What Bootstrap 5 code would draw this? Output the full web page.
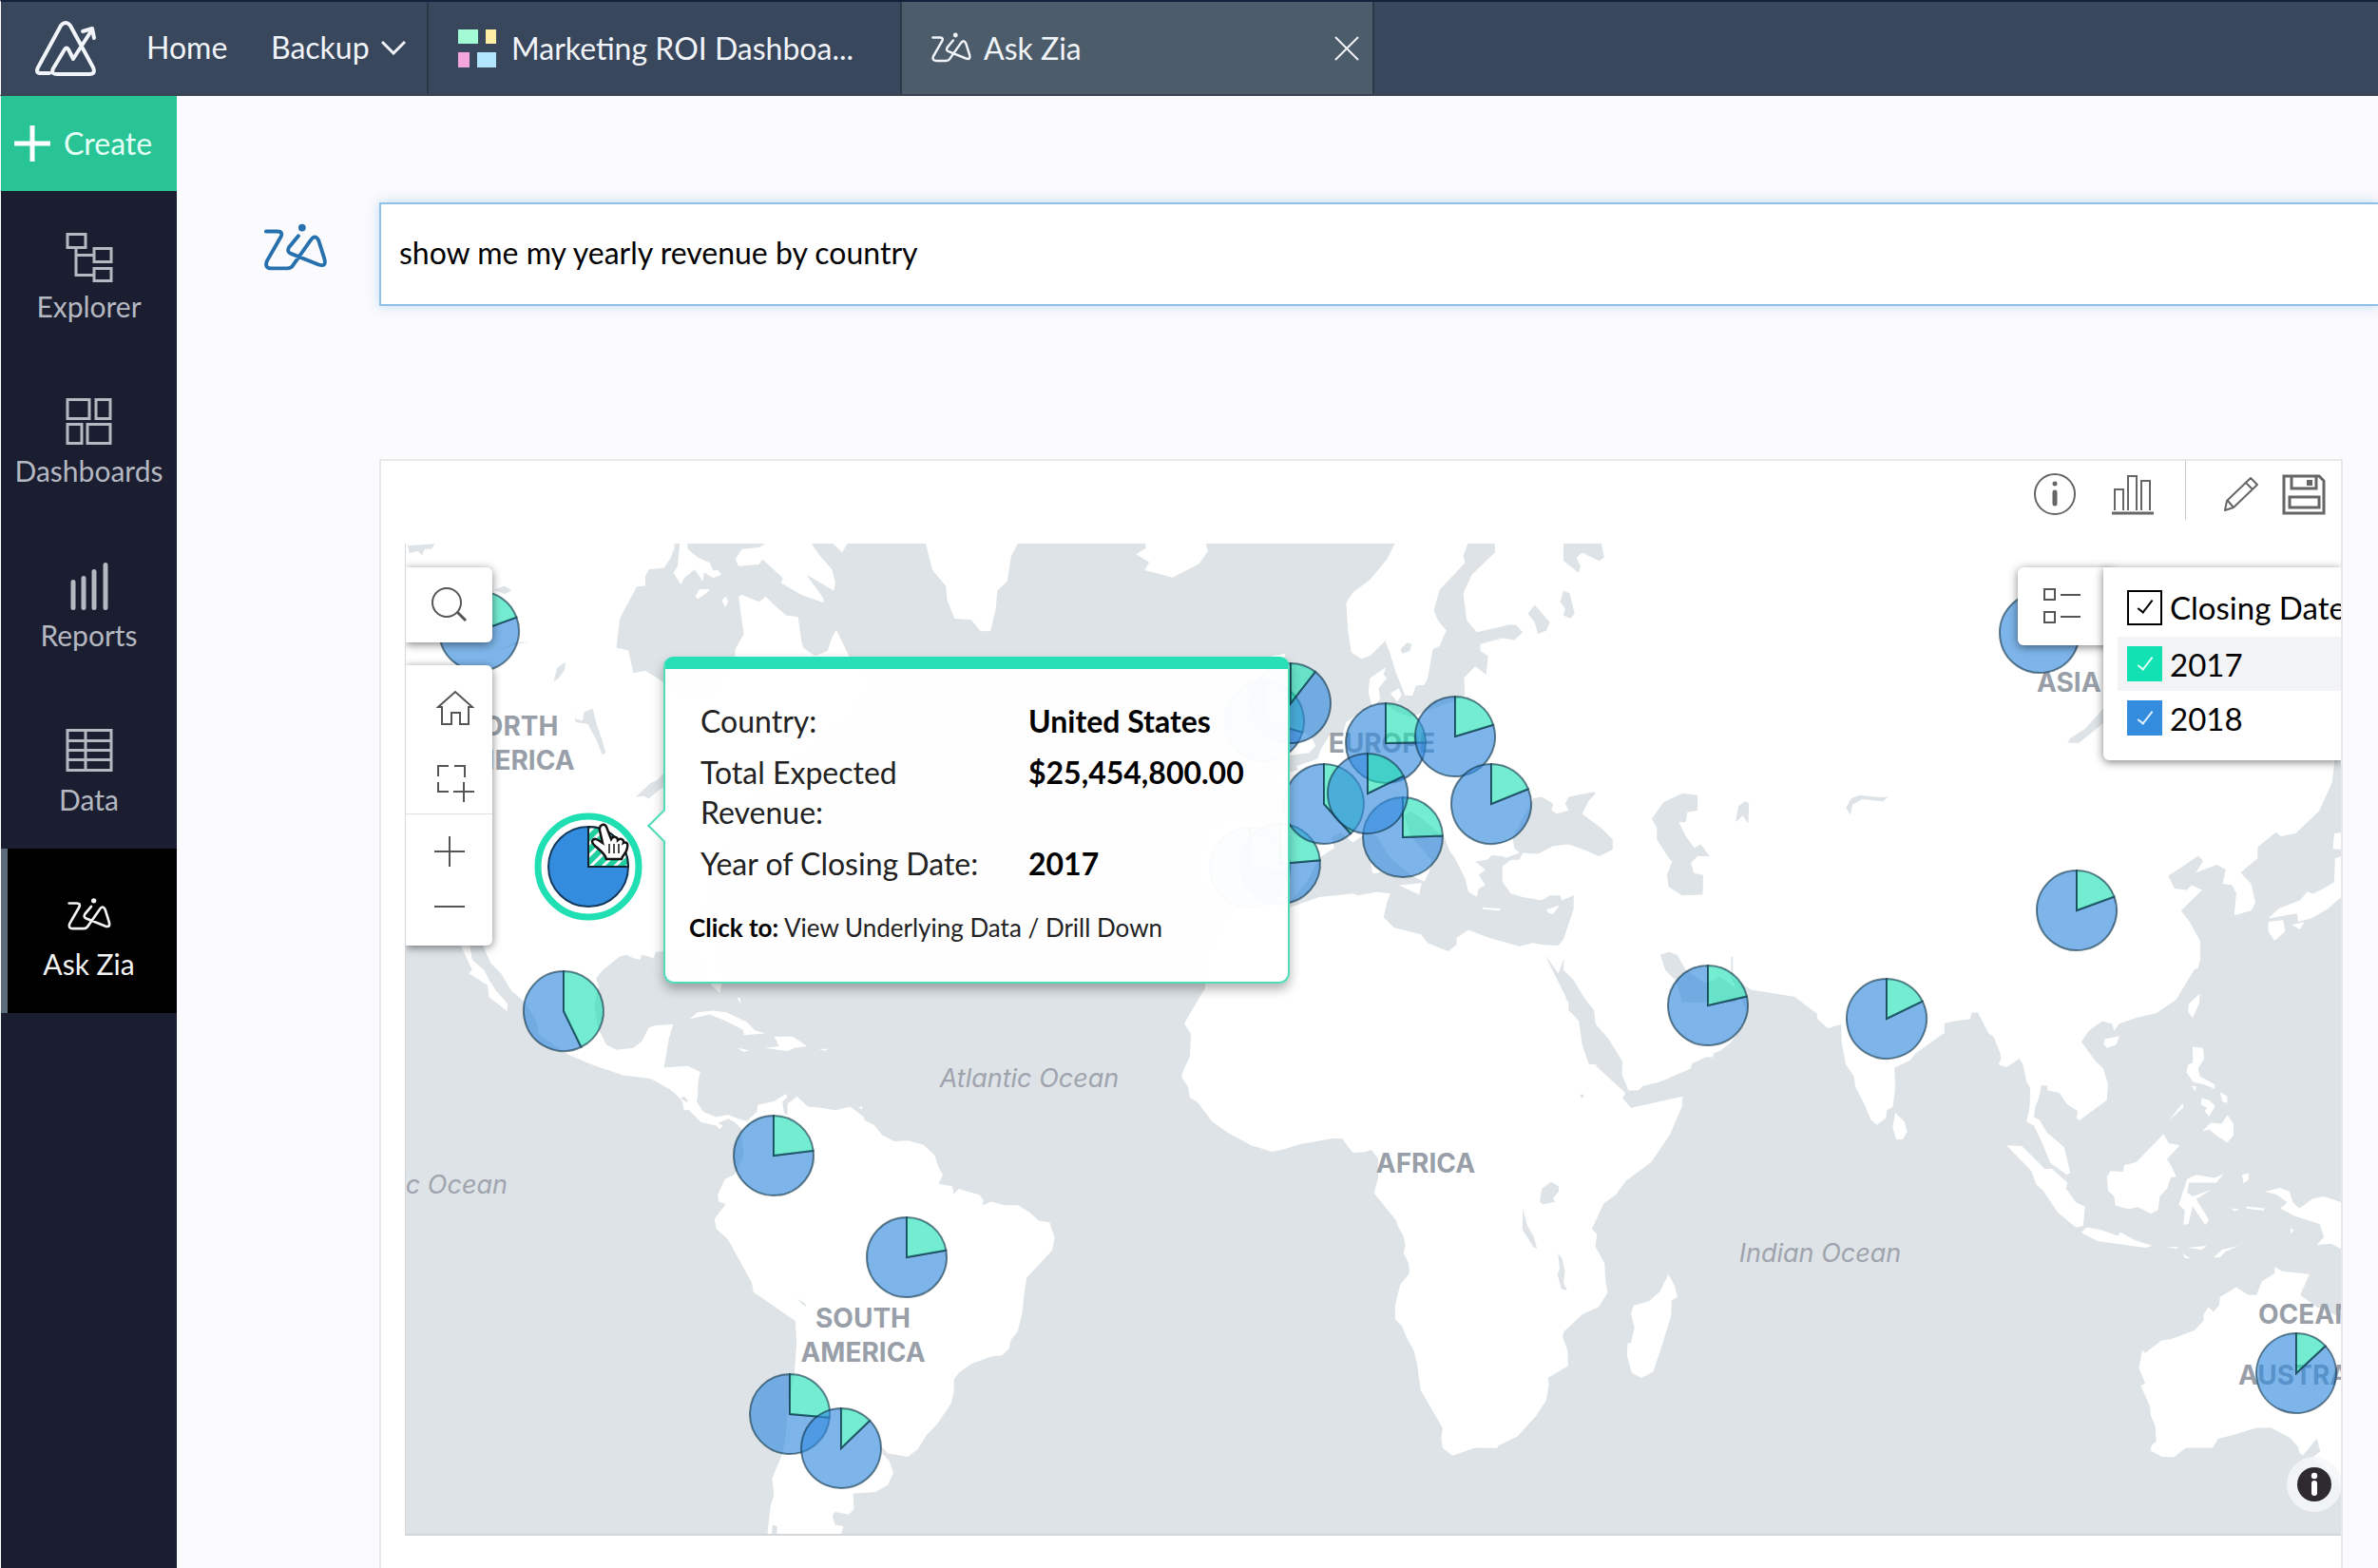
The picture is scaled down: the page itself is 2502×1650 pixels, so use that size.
<!DOCTYPE html>
<html lang="en">
<head>
<meta charset="utf-8">
<meta name="viewport" content="width=device-width, initial-scale=1">
<title>Ask Zia</title>
<link href="https://cdn.jsdelivr.net/npm/bootstrap@5.3.0/dist/css/bootstrap.min.css" rel="stylesheet">
<style>
:root{--navy:#38475c;--side:#1a1e30;--mint:#28e0b7;--text:32px}
body{font-family:Lato,"Liberation Sans",sans-serif;font-size:var(--text);line-height:42px;background:#fbfafd;color:#111;min-height:100vh;overflow-x:hidden}
a,button{color:inherit;text-decoration:none}
.plain-btn{background:none;border:0;padding:0;line-height:0}
.line-icon{fill:none;stroke:currentColor;stroke-width:2;flex:none}
.top-bar{height:101px;background:var(--navy);color:#f1f4f8;border-top:2px solid #16203a;border-bottom:2px solid #3a4653;border-left:1px solid #fff}
.brand-mark{margin:0 52px 0 35px}
.open-tab{border-right:2px solid #2b3947}
.tab-report{width:498px;padding-left:31px;gap:16px}
.tab-zia{width:497px;padding:0 14px 0 30px;gap:12px;background:#4d5c6a}
.space-menu{width:166px;border-right:2px solid #2b3947;gap:12px}
.home-link{width:131px}
.home-link,.space-menu{padding-bottom:2px}
.side-bar{width:186px;background:var(--side);color:#b5b8c0;border-left:1px solid #fff;flex:none}
.create-btn{height:100px;background:#28c495;color:#e4fff5;border:0;gap:14px;padding:0 14px}
.side-item{height:173px;padding-top:42px;gap:6px;font-size:30px;line-height:36px}
.side-item svg{height:55px}
.side-item.current{background:#000;color:#f4f4f4;box-shadow:inset 7px 0 #5b6b7c}
.ask-row{padding:112px 0 0 90px;gap:53px}
.ask-logo{padding-bottom:14px;line-height:0}
.ask-input{height:109px;border:2px solid #8fc1e6;border-right:0;border-radius:0;padding:0 20px 4px 19px;font-size:var(--text);color:#000;background:#fff;box-shadow:0 0 12px rgba(120,185,235,.45)}
.ask-input:focus{border-color:#8fc1e6;box-shadow:0 0 12px rgba(120,185,235,.45)}
.result-card{margin:161px 37px 0 213px;background:#fff;border:2px solid #e9e7ea;border-bottom:0;padding-left:25px}
.tool-row{height:87px;padding:12px 16px 0 0;color:#666}
.tool-row svg{display:block}
.tool-split{width:1px;height:62px;background:#ccc;margin:-12px 39px 0 32px}
.map-area{background:#dde3e6;border-left:1px solid #d5d8da;border-bottom:2px solid #d3d6d8}
.map-area>svg{display:block;width:100%;height:auto}
.region-name{font:700 28px Inter,sans-serif;fill:#999fa8}
.ocean-name{font:italic 400 27px Inter,sans-serif;fill:#a0a4ae}
.float-box{position:absolute;background:#fff;color:#555;box-shadow:0 2px 10px rgba(0,0,0,.5)}
.find-box{left:0;top:25px;width:91px;height:79px;border-radius:0 6px 6px 0}
.zoom-box{left:0;top:128px;width:91px;height:295px;border-radius:0 6px 6px 0;padding-top:26px}
.zoom-box hr{margin:12px 0 22px;width:100%;border-color:#888}
.home-btn{margin:0 0 40px 12px}
.area-btn{margin-left:12px}
.list-box{right:240px;top:25px;width:100px;height:82px;border-radius:6px;padding-left:27px}
.legend-box{right:0;top:25px;width:250px;height:203px;border-radius:0 0 0 6px;padding:11px 0 0 15px;overflow:hidden}
.legend-line{height:57px;padding-left:10px;gap:8px;font-size:33px;line-height:40px;white-space:nowrap;color:#000}
.legend-line.hot{background:#f2f3f5}
.legend-line:first-child{height:62px}
.tick{appearance:none;width:37px;height:37px;margin:0;flex:none;display:grid;place-items:center;background:#fff;border:2px solid #000;color:#000}
.tick::after{content:"";width:8px;height:17px;border:solid currentColor;border-width:0 2px 2px 0;transform:rotate(38deg);margin-top:-5px}
.tick-a{background:#12e2b3;border-color:#12e2b3;color:#d8fff5}
.tick-b{background:#348cde;border-color:#348cde;color:#dcefff}
.tip-box{position:absolute;left:271px;top:119px;width:659px;height:344px;background:rgba(255,255,255,.97);border:2px solid #4fdcb9;border-top:13px solid var(--mint);border-radius:11px;box-shadow:0 6px 12px rgba(0,0,0,.3);padding:34px 20px 0 24px;color:#222}
.tip-box::before{content:"";position:absolute;left:-14px;top:153px;width:24px;height:24px;background:#fff;border:solid #4fdcb9;border-width:0 0 2px 2px;transform:rotate(45deg)}
.tip-data th,.tip-data td{padding:0 0 12px 13px;vertical-align:top}
.tip-data th{font-weight:400;width:344px;padding-right:20px}
.tip-data td{font-weight:700;color:#000;padding-left:14px}
.tip-foot{font-size:26px;line-height:36px;margin-top:16px;padding-left:1px}
.tip-foot b{color:#000}
.credit-btn{position:absolute;right:-1px;bottom:23px;width:58px;height:58px;border-radius:50%;background:rgba(245,247,248,.85)}
</style>
<script src="https://cdn.jsdelivr.net/npm/bootstrap@5.3.0/dist/js/bootstrap.bundle.min.js"></script>
</head>
<body class="d-flex flex-column">
<svg width="0" height="0" class="position-absolute" aria-hidden="true">
<symbol id="zia" viewBox="0 0 72 54"><path d="M4 9H16Q23 9 20 15L5 41Q2 49 10 49H27Q31 49 33 46L52 19Q57 11 61 19L67 38Q70 48 61 45L31 33Q26 31 29 26L39 14" fill="none" stroke="currentColor" stroke-width="4" stroke-linecap="round" stroke-linejoin="round"/><circle cx="43" cy="5" r="4" fill="currentColor"/></symbol>
</svg>
<header class="top-bar d-flex align-items-stretch">
<nav class="d-flex align-items-stretch" aria-label="Workspace">
<a href="#" class="brand-mark d-flex align-items-center" aria-label="Analytics"><svg width="66" height="60" viewBox="0 0 66 60" class="line-icon" stroke-linecap="round" stroke-linejoin="round"><path stroke-width="4" d="M16 56H7Q1 56 4 50L28 6Q33 0 38 6L62 50Q65 57 58 57H24Q17 57 20 51L32 31Q34 28 36 31L41 41 61 10M51 12L61 9 63 19"/></svg></a>
<a href="#" class="home-link d-flex align-items-center">Home</a>
<button class="space-menu plain-btn d-flex align-items-center">Backup <svg width="26" height="16" viewBox="0 0 26 16" class="line-icon"><path stroke-width="3" d="M1 2L13 14 25 2"/></svg></button>
</nav>
<a href="#" class="open-tab tab-report d-flex align-items-center"><svg width="40" height="40" viewBox="0 0 40 40"><path fill="#a3fbd5" d="M0 0h21v15H0z"/><path fill="#fdeea6" d="M29 0h11v15H29z"/><path fill="#f3a5dc" d="M0 24h12v16H0z"/><path fill="#b2e6ff" d="M20 24h20v16H20z"/></svg>Marketing ROI Dashboa...</a>
<div class="open-tab tab-zia d-flex align-items-center"><svg width="44" height="33" class="flex-shrink-0"><use href="#zia"/></svg><a href="#" class="flex-grow-1">Ask Zia</a><button class="plain-btn" aria-label="Close tab"><svg width="26" height="26" viewBox="0 0 26 26" class="line-icon"><path d="M1 1L25 25M25 1L1 25"/></svg></button></div>
</header>
<div class="d-flex flex-grow-1">
<aside class="side-bar d-flex flex-column">
<button class="create-btn d-flex align-items-center"><svg width="38" height="38" viewBox="0 0 38 38" class="line-icon"><path stroke="#fff" stroke-width="5" d="M19 0V38M0 19H38"/></svg>Create</button>
<nav class="d-flex flex-column" aria-label="Sections">
<a href="#" class="side-item d-flex flex-column align-items-center"><svg width="50" viewBox="0 0 50 54" class="line-icon"><path stroke-width="3" d="M2 3H21V17H2zM30 18H48V32H30zM30 39H48V52H30zM11 17V46H30M11 25H30"/></svg>Explorer</a>
<a href="#" class="side-item d-flex flex-column align-items-center"><svg width="50" viewBox="0 0 50 54" class="line-icon"><path stroke-width="3" d="M2 4H25V24H2zM32 4H47V24H32zM2 30H17V50H2zM23 30H47V50H23z"/></svg>Dashboards</a>
<a href="#" class="side-item d-flex flex-column align-items-center"><svg width="50" viewBox="0 0 50 54" class="line-icon" stroke-linecap="round"><path stroke-width="5" d="M8 23V50M19 19V50M30 12V50M42 5V50"/></svg>Reports</a>
<a href="#" class="side-item d-flex flex-column align-items-center"><svg width="50" viewBox="0 0 50 54" class="line-icon"><path stroke-width="3" d="M2 6H48V48H2zM2 17H48M2 27H48M2 37H48M21 6V48"/></svg>Data</a>
<a href="#" class="side-item current d-flex flex-column align-items-center" aria-current="page"><svg width="48"><use href="#zia"/></svg>Ask Zia</a>
</nav>
</aside>
<main class="flex-grow-1 d-flex flex-column">
<div class="ask-row d-flex align-items-center">
<div class="ask-logo"><svg width="70" height="54" color="#2670ad"><use href="#zia"/></svg></div>
<input class="ask-input form-control" type="text" aria-label="Ask Zia a question" value="show me my yearly revenue by country">
</div>
<section class="result-card flex-grow-1">
<div class="tool-row d-flex align-items-start justify-content-end">
<button class="plain-btn" aria-label="Info"><svg width="46" height="46" viewBox="0 0 46 46" class="line-icon"><circle cx="23" cy="23" r="21"/><path stroke-width="5" stroke-linecap="round" d="M23 21V33"/><circle cx="23" cy="12" r="2.5" fill="currentColor" stroke="none"/></svg></button>
<button class="plain-btn ms-4 ps-2" aria-label="Change chart type"><svg width="50" height="46" viewBox="-4 0 50 46" class="line-icon"><path d="M4 40V18H13V40M18 40V4H27V40M32 40V9H41V40"/><path stroke-width="3" d="M1 43H45"/></svg></button>
<div class="tool-split"></div>
<button class="plain-btn me-4" aria-label="Edit"><svg width="38" height="46" viewBox="0 0 38 46" class="line-icon" stroke-linejoin="round"><path d="M2 40L4 30 29 6 36 13 11 37zM24 11L31 18M5 30L11 37"/></svg></button>
<button class="plain-btn" aria-label="Save"><svg width="46" height="46" viewBox="0 0 46 46" class="line-icon"><path stroke-width="3" d="M2 4H39L44 9V43H2zM10 4V17H36V4M8 26H39V37H8z"/><path fill="currentColor" stroke="none" d="M26 8h6v6h-6z"/></svg></button>
</div>
<div class="map-area position-relative overflow-hidden">
<svg viewBox="427 572 2036 1042" role="img" aria-label="Revenue by country">
<defs><pattern id="hatch" width="9" height="9" patternUnits="userSpaceOnUse" patternTransform="rotate(45)"><rect width="9" height="9" fill="#1fcf9f"/><rect width="3" height="9" fill="#fff"/></pattern></defs>
<g fill="#fff">
<!-- North and Central America -->
<g transform="translate(420 560) scale(.357143)">
<path d="M15 20H812L810 50 800 75 780 105 735 110 725 130V158L700 160 690 180 665 225 650 255 640 340 675 348 690 415 725 408 760 430 850 490 930 480 990 365 990 345 1015 300 1008 250 1000 190 1010 185 1060 205 1080 190 1105 215 1140 245 1175 250 1185 320 1190 340 1225 365 1262 350 1275 310 1288 288 1325 365 1400 450 1300 560 1150 680 1000 820 940 1000 900 1100 940 1250 950 1330 945 1358 920 1335 890 1250 780 1235 755 1237 750 1255 715 1245 710 1260 690 1255 670 1245 650 1250 600 1290 580 1315 588 1340 575 1390 585 1460 610 1510 640 1525 690 1520 715 1500 735 1460 755 1453 808 1450 795 1490 790 1520 780 1578 850 1573 885 1590 880 1620 878 1670 860 1690 795 1640 740 1610 660 1600 565 1568 500 1540 410 1480 405 1440 370 1385 330 1350 300 1300 270 1270 245 1215H208L215 1260 250 1290 265 1320 285 1350 320 1390 318 1412 265 1370 260 1335 205 1300 215 1290 180 1215 100 1150 15 1050z"/>
<path d="M828 20H848L850 50 880 75 915 90 925 112 940 112 950 125 925 135 898 118 895 145 870 110 840 135 830 155 808 120 820 100zM1085 30L1060 45 1010 50 990 80 1000 100 1060 95 1070 80 1130 135 1125 150 1185 185 1250 208V195L1200 125 1280 172 1285 150 1275 110 1240 70 1205 20 1085 20zM1275 30L1305 60 1322 30zM872 190L885 168 915 168 905 180 880 197zM950 200L962 190 970 205 960 222z"/>
</g>
<!-- Greenland and Iceland -->
<path transform="translate(420 560) scale(.7015 .3333)" d="M788 20L795 80 800 120 820 170 822 215 833 273 858 277 872 313 887 312 895 240 897 185 912 155 918 75 932 20zM1118 20L1120 50 1105 70 1125 95 1118 120 1160 143 1200 100 1213 60 1208 20z"/>
<!-- Europe and Asia -->
<g transform="translate(1270 560) scale(.357143)">
<path d="M560 20L530 80 480 140 430 178 410 208 415 290 425 355 455 373 480 365 525 320 540 360 555 410 575 460 583 480 605 482 615 452 640 450 650 430 665 345 685 335 705 290 680 260 668 230 685 170 760 90 755 70 773 20z"/>
<path d="M848 20V60L780 125 755 180 765 260 795 295 890 273 910 273 930 295 905 318 870 312 805 330 805 350 828 365 822 420 790 395 757 430 760 480 720 500 640 530 600 545 560 530 530 510 500 505 510 490 505 460 530 430 520 420 527 398 480 430 475 470 485 510 440 540 410 560 400 590 360 600 335 640 325 668 262 690 270 700 200 720 240 800 220 860 100 850 0 860-20 1000 0 1060 100 1100 50 1150 0 1250H3360V20z"/>
<path d="M540 475L565 460 573 480 560 500zM190 365L232 358 225 375 200 385 220 440 250 560 310 610 320 630 300 650 150 670 190 600 170 480z"/>
</g>
<!-- Africa and Arabia -->
<path d="M1268 1000L1268 1040 1260 1053 1246 1077 1253 1088 1252 1112 1246 1124 1243 1133 1250 1144 1252 1155 1260 1160 1275 1180 1292 1192 1316 1205 1338 1212 1352 1209 1368 1204 1402 1198H1500V990z"/>
<g transform="translate(1400 1050) scale(.357143 .363636)">
<path d="M-100-220L-200 200 0 408 32 405 65 448 100 446 120 440 140 465V520L128 565 192 643 200 665 215 690 220 720 215 738 230 770 232 798 205 830 190 890V930L210 950 225 985 245 1020 255 1060 265 1135 330 1245 326 1275 330 1303 360 1325 425 1302 490 1303 495 1295 550 1270 605 1210 635 1165 643 1120 640 1100 700 1065 698 1020 683 980 688 965 743 915 790 895 816 853 810 820 807 768 780 720 785 685 770 668 805 595 840 570 870 530 945 475 1000 395 1035 315 1037 285 885 318 860 290 875 268 907 268 920 255 965 245 990 235 1060 205 1065 190 1105 172 1125 172 1130 160 1150 152 1180 128 1215 80 1225 40 1180-60V-220z"/>
<path d="M995 800L1012 830 1022 865 1005 875 1003 920 975 1010 950 1083 915 1100 887 1085 873 1035 875 1000 885 998 895 955 885 913 893 890 938 878 970 850z"/>
</g>
<!-- South Asia, the islands and Australia -->
<path transform="translate(1900 1000) scale(.38393 .41454)" d="M-200-20V70L-150 100-30 118 0 140 30 160 32 175 60 198 97 188 98 235 110 290 132 320 135 345 160 390 178 430 195 443 220 425 222 405 238 398 245 350 243 298 285 280 300 262 380 210V185L420 178 450 175 455 158 472 158 500 210 515 220 532 260 535 275 528 290 550 297 585 275 595 290 605 335 615 350 613 400 605 435 625 445 648 490 670 540 715 570 725 565 708 500 660 462 640 430 625 423 628 400 640 370 645 343 662 343V355L695 362 715 390 745 408 742 425 750 432 825 380 828 340 815 300 795 283 755 232 775 205 812 180 840 187 845 205 858 187 910 170 960 160 1015 125 1065 48 1075 45 1083 15 1075-20zM1080 110L1078 135 1060 172 1047 155 1050 135zM820 225L860 218 850 240 825 248 816 238zM245 412L270 435 278 460 265 480 248 480 238 450zM550 495L592 497 655 555 675 555 717 590 713 605 740 640 765 650 760 700 740 703 690 665 650 610 632 595 618 560zM755 715L770 703 810 710 855 725 862 715 900 735 950 750 930 755 800 738 765 722zM825 575L835 560 870 562 872 545 905 538 980 467 995 490 1025 495 1005 515 990 530 1003 550 1015 575 1000 577 990 605 970 625 965 660 945 668 910 652 885 657 848 648 845 625 828 610zM1045 580L1070 570 1120 578 1145 568 1125 590 1050 590 1045 615 1060 625 1110 608 1070 632 1105 685 1095 697 1060 650 1048 695 1035 697 1038 660 1022 645zM1060 245L1088 248 1092 275 1075 300 1080 320 1120 340 1122 352 1090 340 1062 335 1043 310 1048 290 1060 285zM1057 345H1070L1068 358zM1085 375L1105 380 1122 395 1105 422 1092 408 1100 400 1083 392zM1135 360L1155 370V388L1142 385zM1085 460L1110 438 1140 440 1155 418 1172 440V470L1155 488 1125 470 1105 455zM1033 388L1035 398 995 432zM1195 570L1213 565V582L1200 592zM1165 655L1187 657 1175 663zM1205 650L1257 655 1255 661 1210 656zM1258 613L1300 603 1325 612 1335 640 1352 655 1390 630 1420 625 1475 642V762L1440 745 1400 748 1420 728 1408 695 1340 675 1300 655 1320 640 1290 620zM1328 705L1337 710 1330 720zM1118 780L1140 760 1187 750 1150 765 1135 780zM985 755L1020 752 1018 757zM1045 755L1098 750 1085 760zM1032 770L1055 782H1040zM1285 803L1305 815 1380 822 1355 875 1400 905 1475 935V1370L1410 1300 1385 1290 1410 1272 1400 1240 1362 1282 1352 1275 1350 1262 1328 1238 1275 1212 1235 1212 1180 1228 1130 1240 1115 1263H1042L1008 1287 975 1285 945 1270 948 1255 960 1248 958 1210 945 1180 943 1158 918 1105 930 1100 913 1060 922 1015 930 1022 975 990 1000 987 1065 965 1090 940V925L1103 905 1118 918 1133 900 1135 880 1180 855 1212 875H1235L1250 840 1285 820z"/>
<!-- South America and the Caribbean -->
<path transform="translate(700 1050) scale(.357143 .363636)" d="M0 203L65 198 103 215 97 240 95 290 92 300 112 330 150 345 185 338 215 350 240 357 270 330 272 310 320 300 355 278 360 288 345 300 350 335 360 340V305L370 300 388 285 420 315 460 318 500 325 545 315 585 345 588 355 615 368 640 398 675 415 715 413 760 425 793 455 805 490 818 512 805 538 845 545 850 568 865 553 925 570 937 585 935 600 960 590 1000 600H1040L1075 622 1100 645 1132 650 1147 695 1140 730 1065 810 1058 850 1052 910 1038 965 1018 990 1013 1015 992 1035 960 1038 900 1060 865 1085 850 1105V1140L843 1172 800 1235 770 1265 745 1305 715 1328 655 1318 638 1300 640 1320 660 1340 672 1375 655 1410 620 1430 553 1435 556 1480 540 1495 500 1488 492 1500 500 1525 525 1530 515 1560H300L310 1470 320 1440 315 1390 328 1360 345 1320 355 1270 360 1200 380 1090 387 1000 383 935 360 920 260 852 255 825 185 700 150 668 145 640 178 597 157 590 155 570 175 525 205 510 230 460 225 380 205 360 185 350 155 362 170 370 160 380 150 370 105 360 70 325 55 325 50 300 12 258zM72 62L95 42 140 37 180 42 240 70 265 95 295 103 232 108 228 92 180 68 130 48zM320 112H375L418 140 380 145 360 155 293 145 335 140 328 125zM213 145L248 152 230 157zM450 148H480L470 153zM212 0H220L222 18zM568 318L580 312V322z"/>
</g>
<!-- Lakes and inner seas -->
<g fill="#dde3e6">
<path transform="translate(420 560) scale(.357143)" d="M25 40L105 34 95 50 75 50 68 68 55 55 30 62zM455 440L465 400 490 383 488 405 470 430zM515 525L520 550 540 555 545 530 570 520 580 560 600 620 608 650 598 655 580 610 555 565 520 560zM280 170L310 158 332 172 310 182zM290 350L340 325 383 323 345 330zM785 705L760 730 740 740 697 780 720 778 735 785 785 745z"/>
<g transform="translate(1270 560) scale(.357143)">
<path d="M200 1118L245 1105 330 1075 430 1065 445 1070 500 1060 540 1065 530 1090 520 1135 550 1165 630 1185 650 1210 710 1235 735 1215V1195L770 1172 830 1195 920 1220 960 1210 985 1215 1035 1218 1050 1200 1080 1110V1070L1045 1085 1040 1070 1010 1070 985 1085 930 1075 895 1065 870 1030V985L895 965H920L930 945 975 948 1020 925 1065 920 1110 935 1155 955 1195 935V905L1165 875 1105 830 1125 790 1145 770 1140 765 1065 780 1055 800 1065 820 1030 830 1015 820 1020 800 985 780 960 785 900 900 905 930 920 945 880 960 870 955 840 952 825 965 790 970 820 995 800 1010 820 1040 800 1050 795 1075 770 1060 760 1020 730 960 715 940 700 900 640 850 600 822 580 835 600 895 660 965 655 1000 640 1030 600 1010 540 960 500 895 470 885 430 915 395 885 365 900 375 930 330 960 300 1020 250 1085z"/>
<path d="M1050 25H1160L1170 75 1155 85 1105 60 1088 75 1100 100 1095 120 1050 85zM965 215L1010 265 1000 290 975 300 965 265 945 240zM1050 172L1068 180 1083 240 1070 255 1050 245 1055 225 1040 205zM570 345L590 325 603 330 598 350 575 358zM1445 775L1400 770 1345 795 1310 845 1325 870V905L1360 960 1370 970 1355 1010 1360 1045 1400 1070 1460 1068 1462 1010 1435 1005 1425 975 1445 955 1480 955 1455 920 1435 930 1410 895 1390 855 1410 855 1415 825 1445 820zM995 1245L1035 1300 1052 1255 1050 1290 1080 1320 1110 1370 1140 1410 1145 1460 1190 1510 1222 1568H1125L1105 1510 1095 1440 1065 1405V1385zM1335 1245L1360 1237 1385 1245 1410 1290 1470 1330 1510 1310 1568 1350 1560 1385 1400 1385 1380 1320 1350 1290z"/>
<path fill="#fff" d="M565 1040L632 1034 625 1068zM482 975L520 1000 488 1006zM810 1105L865 1109 860 1115 812 1111zM1000 1112L1038 1100 1020 1125 1005 1122z"/>
</g>
<path transform="translate(1400 1050) scale(.357143 .363636)" d="M690 0H740L775 35 780 75 820 120 860 185 858 220 878 270 860 292 868 275 785 200 760 150 743 135 733 65 700 35 705 15zM650 533L672 545V560L655 580 662 590 625 598 616 590 622 552zM566 612L580 660 598 690 608 725 598 722 565 670zM670 740L682 755 690 790 686 825 697 847 680 842 668 800 675 785zM735 280L743 279 747 285 739 291z"/>
<path transform="translate(1800 470) scale(.4477 .3333)" d="M58 1185L65 1135 80 1120 90 1125 88 1190 75 1165zM318 1140L330 1110 350 1100 400 1108 417 1105 405 1120 355 1113 333 1130 328 1163zM930 815L880 890 845 920 838 935H865L930 865zM1500 970H1468L1460 1060 1430 1150 1375 1220 1340 1230 1328 1217 1285 1265V1300L1245 1345 1270 1380 1280 1440 1270 1465 1230 1480 1235 1410 1225 1385 1203 1380 1210 1335 1190 1320 1140 1345 1157 1308 1145 1292 1110 1325 1075 1355 1090 1395 1118 1400 1130 1385 1155 1400 1105 1465 1125 1500 1150 1560 1150 1615H1500z"/>
<path transform="translate(700 1050) scale(.357143 .363636)" d="M388 870L412 885 416 895 405 888zM313 1552L316 1525 330 1530 328 1560zM45 290L55 285 68 298 62 302z"/>
</g>
<path fill="#fff" transform="translate(1800 470) scale(.4477 .3333)" d="M1500 1215L1465 1222 1462 1270 1500 1275zM1500 1283L1467 1300 1465 1375 1440 1395 1415 1412 1402 1405 1385 1432 1335 1458 1310 1490 1360 1478 1378 1475 1380 1500 1410 1490 1450 1460 1500 1400zM1310 1500L1345 1495 1350 1530 1325 1560 1310 1530zM1365 1510L1395 1500 1385 1525z"/>
<g class="region-name" text-anchor="middle">
<text x="537" y="774">NORTH</text><text x="539" y="810">AMERICA</text>
<text x="908" y="1397">SOUTH</text><text x="908" y="1433">AMERICA</text>
<text x="1454" y="792">EUROPE</text><text x="1500" y="1234">AFRICA</text>
<text x="2143" y="728" text-anchor="start">ASIA</text><text x="2376" y="1393" text-anchor="start">OCEANIA</text><text x="2355" y="1457" text-anchor="start">AUSTRALIA</text>
</g>
<g class="ocean-name" text-anchor="middle">
<text x="1083" y="1144">Atlantic Ocean</text><text x="1915" y="1328">Indian Ocean</text><text x="534" y="1256" text-anchor="end">Pacific Ocean</text>
</g>
<g id="pins" stroke="#0c3045" stroke-width="2"></g>
<g transform="translate(619 912)">
<circle r="53" fill="#fff" stroke="#1fdfb3" stroke-width="7"/><circle r="42" fill="#348cde" stroke="#14395c" stroke-width="2"/>
<path d="M0 0V-42A42 42 0 0 1 42 0z" fill="url(#hatch)" stroke="#123" stroke-width="2"/>
<path d="M12-38C11-43 16-47 19-42L24-29C26-33 31-31 31-28 34-31 38-28 37-25 41-27 42-23 41-20 40-13 36-13 35-8L19-8C17-17 3-22 4-27 6-32 12-27 15-25z" fill="#fff" stroke="#111" stroke-width="2.5"/><path d="M22-24V-14M27-24V-14M32-24V-14" stroke="#111" stroke-width="1.5"/>
</g>
</svg>
<div class="float-box find-box d-flex align-items-center justify-content-center"><button class="plain-btn" aria-label="Search map"><svg width="40" height="40" viewBox="0 0 40 40" class="line-icon"><circle cx="17" cy="17" r="15"/><path stroke-width="3" d="M28 27L37 36"/></svg></button></div>
<div class="float-box zoom-box d-flex flex-column align-items-center">
<button class="plain-btn home-btn" aria-label="Reset view"><svg width="40" height="38" viewBox="0 0 40 38" class="line-icon"><path d="M2 18L20 2 38 18H34V36H25V24H16V36H6V18z"/></svg></button>
<button class="plain-btn area-btn" aria-label="Select area"><svg width="40" height="40" viewBox="0 0 40 40" class="line-icon"><path d="M2 13V2H13M19 2H30V14M2 19V29H13M29 19V40M18 29H40"/></svg></button>
<hr>
<button class="plain-btn mb-4" aria-label="Zoom in"><svg width="34" height="34" viewBox="0 0 34 34" class="line-icon"><path d="M17 1V33M1 17H33"/></svg></button>
<button class="plain-btn" aria-label="Zoom out"><svg width="34" height="34" viewBox="0 0 34 34" class="line-icon"><path d="M1 17H33"/></svg></button>
</div>
<div class="float-box list-box d-flex align-items-center"><button class="plain-btn" aria-label="Toggle legend"><svg width="40" height="38" viewBox="0 0 40 38" class="line-icon"><path d="M1 1H12V12H1zM1 25H12V36H1zM18 7H39M18 30H39"/></svg></button></div>
<div class="float-box legend-box">
<label class="legend-line d-flex align-items-center"><input class="tick" type="checkbox" checked>Closing Date</label>
<label class="legend-line hot d-flex align-items-center"><input class="tick tick-a" type="checkbox" checked>2017</label>
<label class="legend-line d-flex align-items-center"><input class="tick tick-b" type="checkbox" checked>2018</label>
</div>
<div class="tip-box">
<table class="tip-data"><tbody>
<tr><th scope="row">Country:</th><td>United States</td></tr>
<tr><th scope="row">Total Expected Revenue:</th><td>$25,454,800.00</td></tr>
<tr><th scope="row">Year of Closing Date:</th><td>2017</td></tr>
</tbody></table>
<div class="tip-foot"><b>Click to:</b> View Underlying Data / Drill Down</div>
</div>
<button class="credit-btn plain-btn d-flex align-items-center justify-content-center" aria-label="Map credits"><svg width="36" height="36" viewBox="0 0 36 36"><circle cx="18" cy="18" r="18" fill="#2e2a2f"/><circle cx="18" cy="9" r="3.2" fill="#fff"/><path stroke="#fff" stroke-width="6" stroke-linecap="round" d="M18 17V27"/></svg></button>
</div>
</section>
</main>
</div>
<script>
// x, y and the 2017 share of each country's revenue in degrees
const pies = [[504,664,70],[593,1064,154],[1330,759,106],[1358,740,38],[1315,913,100],[1347,909,85],[1458,782,89],[1531,775,73],[1569,846,68],[1393,846,138],[1476,881,88],[1439,835,64],[1797,1058,77],[1985,1072,64],[2185,958,70],[2146,666,70],[2416,1445,47],[814,1216,83],[954,1323,80],[831,1488,95],[885,1524,46]];
const r = 42;
document.getElementById("pins").innerHTML = pies.map(([x, y, deg]) => {
  const a = deg * Math.PI / 180, ex = r * Math.sin(a), ey = -r * Math.cos(a);
  return `<g transform="translate(${x} ${y})" stroke-opacity=".6">
<path fill="#348cde" fill-opacity=".64" d="M0 0L${ex} ${ey}A${r} ${r} 0 ${deg < 180 ? 1 : 0} 1 0 ${-r}z"/>
<path fill="#1fe0b4" fill-opacity=".62" d="M0 0V${-r}A${r} ${r} 0 ${deg > 180 ? 1 : 0} 1 ${ex} ${ey}z"/></g>`;
}).join("");
</script>
</body>
</html>
